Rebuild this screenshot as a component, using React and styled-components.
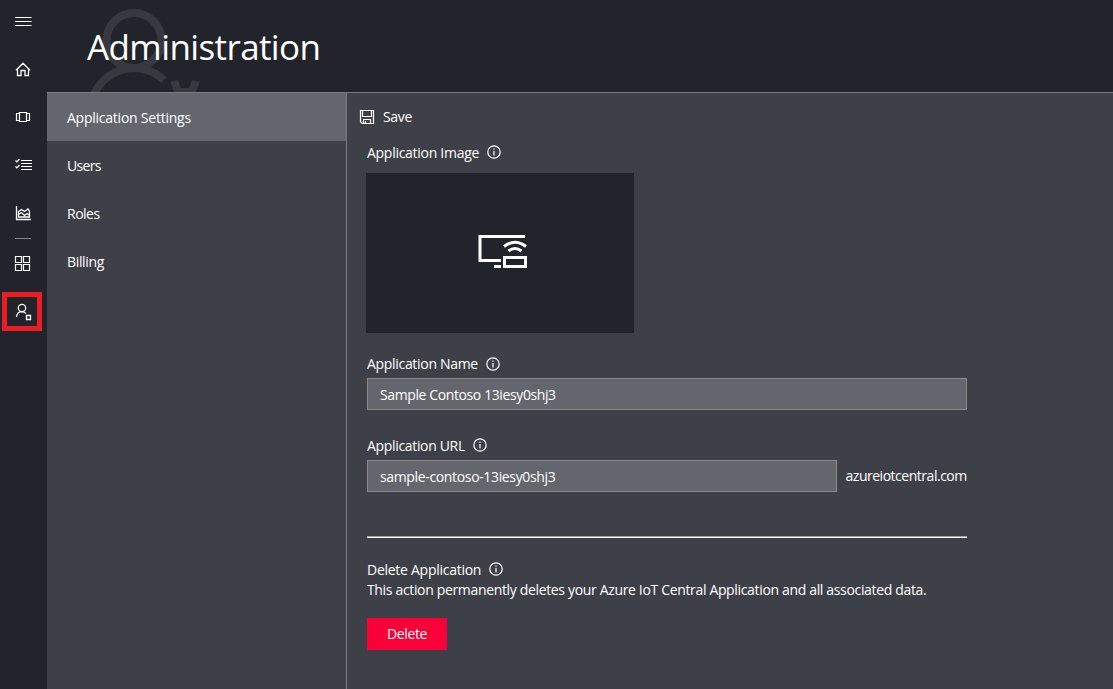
import React from 'react';
import styled, { createGlobalStyle } from 'styled-components';

const GlobalStyle = createGlobalStyle`
  * { box-sizing: border-box; }
  body {
    margin: 0;
    background: #21242b;
    color: #fff;
    font: 14px/20px "Open Sans", "Noto Sans", sans-serif;
  }
`;

const Page = styled.div`
  display: flex;
  height: 689px;
  overflow: hidden;
`;

const Rail = styled.nav`
  width: 47px;
  flex: none;
  display: flex;
  flex-direction: column;
`;

const RailItem = styled.a`
  height: ${(p) => p.$height || 48}px;
  display: block;
  svg { display: block; }
`;

const RailDivider = styled.hr`
  width: 16px;
  height: 1px;
  border: 0;
  margin: 1px 0 0 15px;
  background: #85868a;
`;

const HighlightedItem = styled(RailItem)`
  width: 40px;
  height: 39px;
  margin: 5px 0 0 2px;
  border: 5px solid #ed1c24;
`;

const Main = styled.main`
  flex: 1;
  display: flex;
  flex-direction: column;
`;

const Header = styled.header`
  position: relative;
  height: 93px;
  border-bottom: 1px solid #7d7c7b;
  padding: 20px 0 0 40px;
`;

const Watermark = styled.svg`
  position: absolute;
  left: 0;
  top: 0;
`;

const Title = styled.h1`
  position: relative;
  margin: 0;
  font-size: 35px;
  line-height: 53px;
  font-weight: 400;
  letter-spacing: ${(p) => p.$track || 0}px;
`;

const Body = styled.div`
  flex: 1;
  display: flex;
  background: #3e4047;
`;

const Menu = styled.div`
  width: 300px;
  border-right: 1px solid #7d7c7b;
`;

const MenuItem = styled.div`
  height: 48px;
  padding: 15px 20px 0;
  background: ${(p) => (p.$active ? '#63666d' : 'transparent')};
`;

const Text = styled.span`
  white-space: nowrap;
  letter-spacing: ${(p) => p.$track ?? -0.35}px;
`;

const Content = styled.section`
  flex: 1;
  padding: 14px 0 0 20px;
`;

const SaveButton = styled.div`
  display: flex;
  align-items: center;
  gap: 8px;
  height: 20px;
  margin-left: -8px;
`;

const Label = styled.div`
  display: flex;
  height: 20px;
  gap: 8px;
  margin-top: ${(p) => p.$top}px;
`;

const Preview = styled.div`
  width: 268px;
  height: 160px;
  margin: 10px 0 0 -1px;
  background: #21242b;
`;

const FieldRow = styled.div`
  display: flex;
  align-items: center;
  gap: 8.5px;
  margin-top: 4px;
`;

const Field = styled.div`
  width: ${(p) => p.$width}px;
  height: 32px;
  padding: 6px 12px 0;
  border: 1px solid #8a8986;
  background: #63666d;
`;

const Separator = styled.hr`
  width: 600px;
  height: 2px;
  border: 0;
  border-top: 1px solid #a19f9e;
  background: #fff;
  margin: 44px 0 0;
`;

const DeleteButton = styled.div`
  width: 80px;
  height: 32px;
  margin-top: 18px;
  padding-top: 6px;
  text-align: center;
  background: #f90038;
`;

const InfoIcon = ({ y = 2 }) => (
  <svg width="14" height="20" fill="none" stroke="#fff">
    <circle cx="7" cy={y + 7} r="6.2" strokeWidth="1.2" />
    <path d={`M7 ${y + 6}v4.5M7 ${y + 3.5}v1.3`} strokeWidth="1.2" />
  </svg>
);

const SaveIcon = () => (
  <svg width="16" height="16" fill="none" stroke="#fff" strokeWidth="1.2">
    <path d="M1.5 1.5h13v13H3.3l-1.8-1.8zM3.5 1.5v6h9v-6M4.5 14.5v-4h7v4M6.5 12v2.5" />
  </svg>
);

const RailSvg = ({ top, height = 48, children }) => (
  <svg width="47" height={height} viewBox={`0 ${top} 47 ${height}`} fill="none" stroke="#fff" strokeWidth="1.2">
    {children}
  </svg>
);

export default function App() {
  return (
    <>
      <GlobalStyle />
      <Page>
        <Rail>
          <RailItem $height={45}>
            <RailSvg top={0} height={45}><path d="M15 17.5h16.5M15 21.5h16.5M15 25.5h16.5" /></RailSvg>
          </RailItem>
          <RailItem>
            <RailSvg top={45}>
              <path d="M16 70.2l7-7 7 7M17.5 69v6.5h3.5v-5h4v5h3.5V69" strokeWidth="1.3" />
            </RailSvg>
          </RailItem>
          <RailItem>
            <RailSvg top={93}>
              <path d="M19.5 112.5h7v9h-7zM19 113.5h-2.5v7H19M27 113.5h2.5v7H27" />
            </RailSvg>
          </RailItem>
          <RailItem>
            <RailSvg top={141}>
              <path d="M21 160.5h11M21 163.5h11M21 166.5h11M21 169.5h11M15.5 160.5l1.3 1.3 2.7-2.8M15.5 166.5l1.3 1.3 2.7-2.8" />
            </RailSvg>
          </RailItem>
          <RailItem>
            <RailSvg top={189}>
              <path d="M16.5 206v13.5H31M18.5 217v-5.5l3-2 3 2 3.5-2.5 1.5 2.5v5.5zM18.5 214.5l3-2 3 3 2.5-2 2.5 2" strokeWidth="1.3" />
            </RailSvg>
          </RailItem>
          <RailDivider />
          <RailItem>
            <RailSvg top={239}>
              <path d="M15.5 256.5h6v6h-6zM23.5 256.5h6v6h-6zM15.5 264.5h6v6h-6zM23.5 264.5h6v6h-6z" />
            </RailSvg>
          </RailItem>
          <HighlightedItem>
            <svg width="30" height="29" viewBox="7 297 30 29" fill="none" stroke="#fff" strokeWidth="1.3">
              <circle cx="22" cy="308" r="3.7" />
              <path d="M16.5 317c.3-3.2 2.3-5.2 5.3-5.3 1.7 0 3 .6 4.2 1.8M26.5 315.5h4v4h-4z" />
            </svg>
          </HighlightedItem>
        </Rail>
        <Main>
          <Header>
            <Watermark width="180" height="92" viewBox="47 0 180 92" fill="none" stroke="#36393e" strokeWidth="8">
              <circle cx="134" cy="40.5" r="27.5" />
              <path d="M92.7 98A43.5 43.5 0 0 1 164 80" />
              <path d="M170.5 82l7.5-2 3 8h8l3-8 8 2-4 10h-22z" fill="#36393e" stroke="none" />
            </Watermark>
            <Title $track={-0.6}>Administration</Title>
          </Header>
          <Body>
            <Menu>
              <MenuItem $active><Text $track={-0.24}>Application Settings</Text></MenuItem>
              <MenuItem><Text $track={-0.7}>Users</Text></MenuItem>
              <MenuItem><Text $track={-0.5}>Roles</Text></MenuItem>
              <MenuItem><Text>Billing</Text></MenuItem>
            </Menu>
            <Content>
              <SaveButton><SaveIcon /><Text>Save</Text></SaveButton>
              <Label $top={16}><Text $track={-0.28}>Application Image</Text><InfoIcon y={2} /></Label>
              <Preview>
                <svg width="268" height="160" viewBox="366 173 268 160" fill="none" stroke="#fff" strokeWidth="3">
                  <path d="M525 236.5h-45v24h21M494 266.5h7M504.5 257.5h21v9h-21z" />
                  <path d="M504 246.5q11-8.5 22 0M508.5 251q6.5-5 13 0" />
                </svg>
              </Preview>
              <Label $top={21}><Text $track={-0.31}>Application Name</Text><InfoIcon y={3} /></Label>
              <FieldRow><Field $width={600}><Text $track={-0.39}>Sample Contoso 13iesy0shj3</Text></Field></FieldRow>
              <Label $top={26}><Text $track={-0.33}>Application URL</Text><InfoIcon y={2} /></Label>
              <FieldRow>
                <Field $width={470}><Text>sample-contoso-13iesy0shj3</Text></Field>
                <Text $track={-0.48}>azureiotcentral.com</Text>
              </FieldRow>
              <Separator />
              <Label $top={22}><Text $track={-0.27}>Delete Application</Text><InfoIcon y={2} /></Label>
              <Text $track={-0.34}>This action permanently deletes your Azure IoT Central Application and all associated data.</Text>
              <DeleteButton><Text>Delete</Text></DeleteButton>
            </Content>
          </Body>
        </Main>
      </Page>
    </>
  );
}
